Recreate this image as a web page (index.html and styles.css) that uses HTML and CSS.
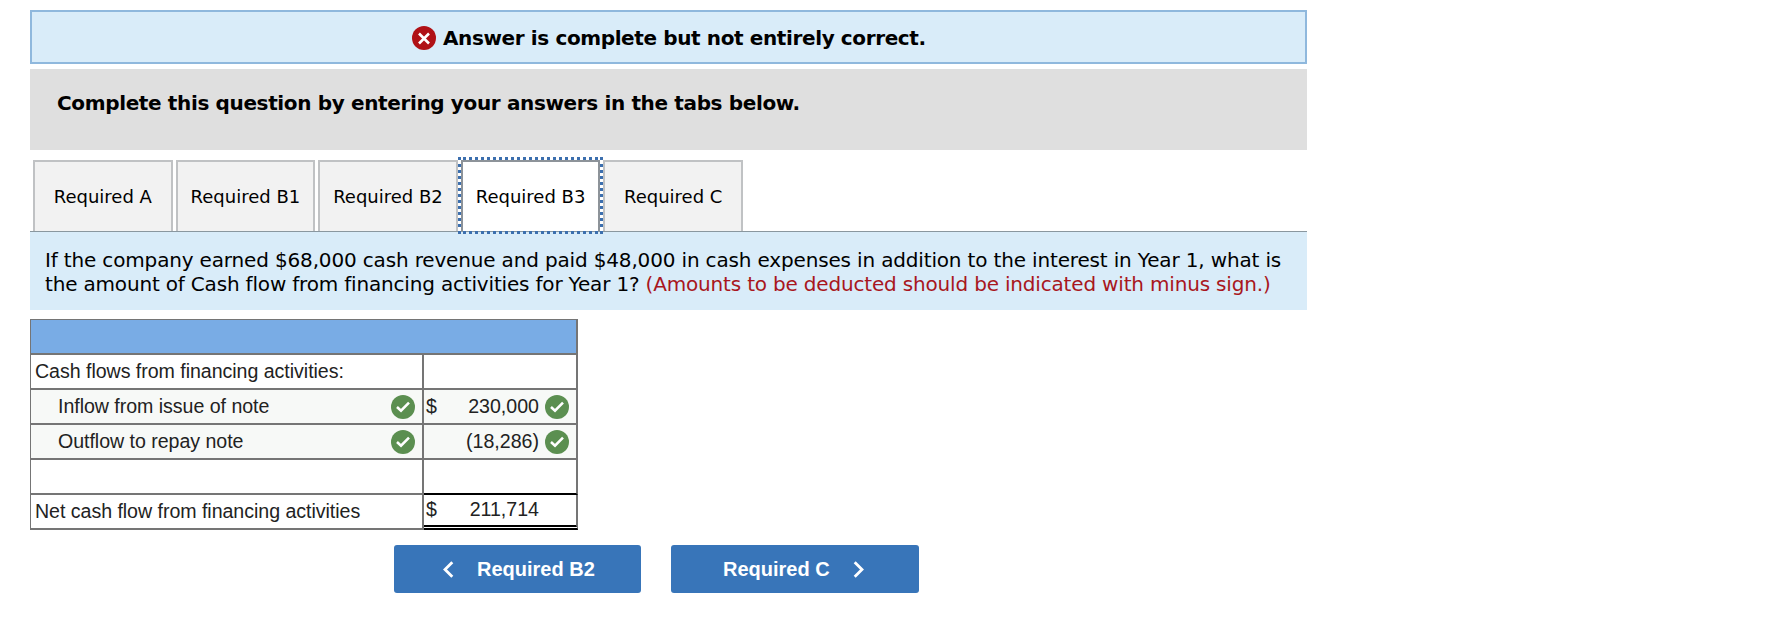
FILE: index.html
```html
<!DOCTYPE html>
<html lang="en">
<head>
  <meta charset="UTF-8">
  <title>Required B3</title>
  <link rel="stylesheet" href="styles.css">
</head>
<body>
  <svg class="defs" width="0" height="0">
    <symbol id="check" viewBox="0 0 24 24">
      <circle cx="12" cy="12" r="12" fill="#5b8f50"/>
      <path d="M6 12l4 3.6 8-8" fill="none" stroke="#fff" stroke-width="2.6"/>
    </symbol>
  </svg>

  <div class="container">
    <div class="banner">
      <svg class="icon" viewBox="0 0 24 24">
        <circle cx="12" cy="12" r="12" fill="#b01116"/>
        <path d="M7 7.5l10 10M17 7.5l-10 10" stroke="#fff" stroke-width="2.6"/>
      </svg>
      <span>Answer is complete but not entirely correct.</span>
    </div>

    <div class="instructions"><span>Complete this question by entering your answers in the tabs below.</span></div>

    <div class="tabs">
      <div class="tab">Required A</div>
      <div class="tab">Required B1</div>
      <div class="tab">Required B2</div>
      <div class="tab active">Required B3</div>
      <div class="tab">Required C</div>
    </div>

    <div class="question">
      <div class="line1">If the company earned $68,000 cash revenue and paid $48,000 in cash expenses in addition to the interest in Year 1, what is</div>
      <div class="line2">the amount of Cash flow from financing activities for Year 1? <span class="hint">(Amounts to be deducted should be indicated with minus sign.)</span></div>
    </div>

    <div class="sheet">
      <div class="row head"></div>
      <div class="row">
        <div class="label">Cash flows from financing activities:</div>
        <div class="value"></div>
      </div>
      <div class="row answer">
        <div class="label indent">Inflow from issue of note <svg class="icon"><use href="#check"/></svg></div>
        <div class="value"><span>$</span><span class="num">230,000</span><svg class="icon"><use href="#check"/></svg></div>
      </div>
      <div class="row answer">
        <div class="label indent">Outflow to repay note <svg class="icon"><use href="#check"/></svg></div>
        <div class="value"><span class="num">(18,286)</span><svg class="icon"><use href="#check"/></svg></div>
      </div>
      <div class="row before-total">
        <div class="label"></div>
        <div class="value"></div>
      </div>
      <div class="row">
        <div class="label">Net cash flow from financing activities</div>
        <div class="value total"><span>$</span><span class="num">211,714</span></div>
      </div>
    </div>

    <div class="buttons">
      <button class="prev">
        <svg width="11" height="17" viewBox="0 0 11 17"><path d="M9.3 1.2L2 8.5l7.3 7.3"/></svg>
        <span>Required B2</span>
      </button>
      <button class="next">
        <span>Required C</span>
        <svg width="11" height="17" viewBox="0 0 11 17"><path d="M1.7 1.2L9 8.5l-7.3 7.3"/></svg>
      </button>
    </div>
  </div>
</body>
</html>
```

FILE: styles.css
```css
* {
  box-sizing: border-box;
}

body {
  margin: 0;
  background: #fff;
  color: #000;
  font-family: Verdana, "DejaVu Sans", sans-serif;
  font-size: 20px;
}

.defs {
  display: block;
}

.container {
  width: 1277px;
  margin-left: 30px;
  padding-top: 10px;
}

.icon {
  width: 24px;
  height: 24px;
  flex: none;
}

.banner {
  display: flex;
  align-items: center;
  height: 54px;
  padding: 2px 0 0 380px;
  gap: 7px;
  border: 2px solid #8fb8dd;
  background: #d9ecf9;
  font-weight: bold;
  letter-spacing: -0.38px;
  white-space: nowrap;
}

.instructions {
  height: 81px;
  margin-top: 5px;
  padding: 22px 0 0 27px;
  background: #dfdfdf;
  font-weight: bold;
  line-height: 24px;
  letter-spacing: -0.36px;
  white-space: nowrap;
}

.tabs {
  display: flex;
  gap: 3px;
  margin-top: 10px;
  padding-left: 3px;
}

.tab {
  display: flex;
  align-items: center;
  justify-content: center;
  width: 139.6px;
  height: 71px;
  border: 2px solid #c0c2c4;
  border-bottom: none;
  background: #f2f2f2;
  font-size: 18px;
  white-space: nowrap;
}

.tab.active {
  position: relative;
  border-color: #8d9399;
  background: #fff;
  outline: 3px dotted #3c6fae;
}

.question {
  height: 79px;
  padding: 16px 0 0 15px;
  border-top: 1px solid #8a979f;
  background: #d9ecf9;
  line-height: 24px;
  white-space: nowrap;
}

.line1 {
  letter-spacing: -0.16px;
}

.line2 {
  letter-spacing: -0.18px;
}

.hint {
  color: #a81620;
}

.sheet {
  width: 548px;
  margin-top: 9px;
  border-top: 1px solid #757575;
  border-left: 1px solid #757575;
  color: #222;
  font-family: "Liberation Sans", Arial, sans-serif;
  font-size: 19.6px;
}

.row {
  display: flex;
  height: 35px;
}

.head {
  border-right: 2px solid #757575;
  border-bottom: 2px solid #757575;
  background: #79ace5;
}

.label,
.value {
  display: flex;
  align-items: center;
  border-right: 2px solid #757575;
  border-bottom: 2px solid #757575;
}

.label {
  width: 393px;
  padding-left: 4px;
  letter-spacing: -0.04px;
  white-space: nowrap;
}

.label.indent {
  justify-content: space-between;
  padding: 0 7px 0 27px;
}

.value {
  width: 154px;
  padding: 0 7px 0 2px;
}

.answer {
  background: #f7f9f7;
}

.num {
  width: 92px;
  margin: 0 6px 0 auto;
  text-align: right;
}

.before-total .value {
  border-bottom-color: #000;
}

.total {
  padding-bottom: 1px;
  border-bottom: 5px double #000;
}

.total .num {
  margin-right: 30px;
}

.buttons {
  display: flex;
  gap: 30px;
  margin: 15px 0 0 364px;
}

button {
  display: flex;
  align-items: center;
  width: 247px;
  height: 48px;
  padding: 0;
  border: none;
  border-radius: 3px;
  background: #3875b9;
  color: #fff;
  font: bold 20px "Liberation Sans", Arial, sans-serif;
}

button path {
  fill: none;
  stroke: #fff;
  stroke-width: 2.8;
}

.prev {
  padding-left: 49px;
  gap: 23px;
}

.next {
  width: 248px;
  padding-left: 52px;
  gap: 23px;
}
```
